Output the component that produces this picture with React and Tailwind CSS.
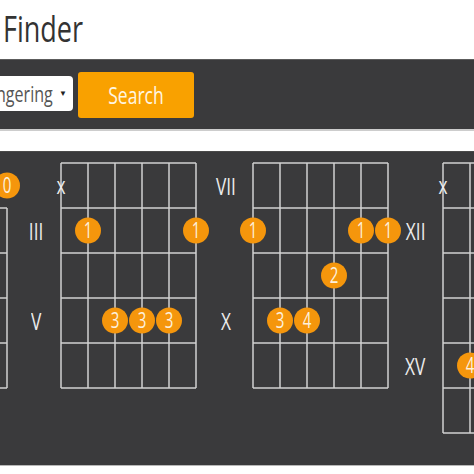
import React from "react";

const LINE = "#d2d2d2";
const DOT = "#f5960c";

function Diagram({ top = 0, bottom = 5, dots = [], marks = [] }) {
  const h = 1 + 45 * bottom + 2;
  const xs = [0, 1, 2, 3, 4, 5].map((i) => 1 + 27 * i);
  const rows = [];
  for (let j = top; j <= bottom; j++) rows.push(1 + 45 * j);
  const y0 = 1 + 45 * top;
  const y1 = 1 + 45 * bottom;
  return (
    <svg width="137" height={h} className="shrink-0 block" style={{ overflow: "visible" }}>
      {rows.map((y) => (
        <line key={"h" + y} x1="1" x2="136" y1={y} y2={y} stroke={LINE} strokeWidth="1.5" />
      ))}
      {xs.map((x) => (
        <line key={"v" + x} x1={x} x2={x} y1={y0} y2={y1} stroke={LINE} strokeWidth="1.5" />
      ))}
      {marks.map(([s, label], k) => (
        <text
          key={"m" + k}
          transform={`translate(${xs[s]} ${1 + 22.5 + 8}) scale(0.75 1)`}
          textAnchor="middle"
          fontSize="23"
          fill="#ececec"
          fontFamily="'Open Sans', sans-serif"
        >
          {label}
        </text>
      ))}
      {dots.map(([s, r, label], k) => {
        const cx = xs[s];
        const cy = 1 + 45 * (r + 0.5);
        return (
          <g key={"d" + k}>
            <circle cx={cx} cy={cy} r="13" fill={DOT} />
            <text
              transform={`translate(${cx} ${cy + 7.5}) scale(0.72 1)`}
              textAnchor="middle"
              fontSize="21"
              fill="#fdf0dc"
              fontFamily="'Open Sans', sans-serif"
            >
              {label}
            </text>
          </g>
        );
      })}
    </svg>
  );
}

function Labels({ width, items }) {
  return (
    <div className={`shrink-0 flex flex-col pt-[1px] ${width}`}>
      {items.map((t, i) => (
        <div key={i} className="h-[45px] flex items-center justify-center">
          <span className="inline-block scale-x-[0.72] text-[24px] leading-none text-[#ececec]">{t}</span>
        </div>
      ))}
    </div>
  );
}

export default function App() {
  return (
    <div
      className="w-[474px] h-[474px] overflow-hidden bg-white"
      style={{ fontFamily: "'Open Sans', sans-serif" }}
    >
      <div className="h-[59px] pt-[6px] pl-[3px]">
        <span className="inline-block origin-left scale-x-[0.73] text-[37px] leading-[44px] text-[#333] whitespace-nowrap">
          Finder
        </span>
      </div>
      <div className="h-[72px] bg-[#3a3a3c] border-t border-[#5c5c5c] border-b-2 border-b-[#cdcdcd] flex items-center">
        <div className="h-[35px] w-[73px] bg-white rounded-r-[4px] flex items-center justify-end pr-[6px] overflow-hidden -mt-[3px]">
          <span className="inline-block origin-right scale-x-[0.73] text-[22px] leading-none text-[#555] whitespace-nowrap">
            ngering
          </span>
          <span className="ml-[6px] text-[8px] text-[#222] leading-none">▼</span>
        </div>
        <div className="ml-[5px] w-[116px] h-[46px] bg-[#f9a100] rounded-[3px] flex items-center justify-center">
          <span className="inline-block scale-x-[0.73] text-[24px] leading-none text-[#fff6e2]">Search</span>
        </div>
      </div>
      <div className="h-[20px]" />
      <div className="h-[315px] bg-[#3a3a3c] border-t border-[#4a4a4a] border-b border-b-[#b8b8b8] overflow-hidden">
        <div className="flex items-start pt-[10px] -ml-[129px]">
          <Diagram top={1} bottom={5} dots={[[5, 0, "0"]]} />
          <Labels width="w-[52px] pl-[4px]" items={["", "III", "", "V", "", ""]} />
          <Diagram
            top={0}
            bottom={5}
            marks={[[0, "x"]]}
            dots={[
              [1, 1, "1"],
              [5, 1, "1"],
              [2, 3, "3"],
              [3, 3, "3"],
              [4, 3, "3"],
            ]}
          />
          <Labels width="w-[55px] pl-[2px]" items={["VII", "", "", "X", "", ""]} />
          <Diagram
            top={0}
            bottom={5}
            dots={[
              [0, 1, "1"],
              [4, 1, "1"],
              [5, 1, "1"],
              [3, 2, "2"],
              [1, 3, "3"],
              [2, 3, "4"],
            ]}
          />
          <Labels width="w-[53px]" items={["", "XII", "", "", "XV", ""]} />
          <Diagram top={0} bottom={6} marks={[[0, "x"]]} dots={[[1, 4, "4"]]} />
        </div>
      </div>
    </div>
  );
}
